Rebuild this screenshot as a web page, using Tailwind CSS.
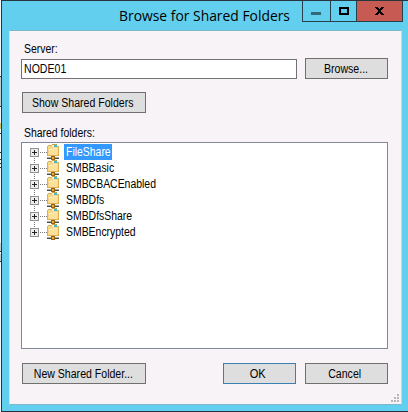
<!DOCTYPE html>
<html lang="en">
<head>
<meta charset="utf-8">
<title>Browse for Shared Folders</title>
<script src="https://cdn.jsdelivr.net/npm/@tailwindcss/browser@4"></script>
</head>
<body class="flex w-[408px] h-[412px] overflow-hidden bg-[#f4f6f7] font-['Liberation_Sans',sans-serif] text-[12px] leading-[16px] text-black">
<svg width="0" height="0" class="absolute">
  <symbol id="share" viewBox="0 0 14 16" shape-rendering="crispEdges">
    <path d="M1 2h1V1h4v1h7v10H1z" fill="#dfac50"/>
    <path d="M6 0h5v2H6z" fill="#c8a04d"/><path d="M8 1h3v2H8z" fill="#4fb6c6"/><path d="M6 1h2v2H6z" fill="#fff0bd"/>
    <path d="M2 2h4v1h6v8H2z" fill="#f8d586"/>
    <path d="M8 1h3v1H8z" fill="#4fb6c6"/>
    <path d="M3 5h3v-1h6v7H3z" fill="#ffe09b"/><path d="M3 5h3v1H3zM7 4h4v1H7z" fill="#fff1c4"/>
    <path d="M6 12h2v1H6z" fill="#666"/>
    <path d="M1 13h12v2H1z" fill="#aaa99c"/><path d="M1 14h12v1H1z" fill="#504f48"/>
    <path d="M5 12h4v4H5z" fill="#926412"/><path d="M6 13h2v2H6z" fill="#e3ae2c"/>
  </symbol>
  <symbol id="plus" viewBox="0 0 9 9" shape-rendering="crispEdges">
    <path d="M0 0h9v9H0z" fill="#919191"/><path d="M1 1h7v7H1z" fill="#ededed"/>
    <path d="M2 4h5v1H2zM4 2h1v5H4z" fill="#222"/>
  </symbol>
</svg>
<svg class="shrink-0" width="1" height="412" viewBox="0 0 1 412" shape-rendering="crispEdges">
  <path d="M0 77h1v29H0zM0 243h1v8H0zM0 254h1v7H0z" fill="#c5ccd0"/><path d="M0 123h1v6H0z" fill="#d8c067"/>
  <path d="M0 76h1v1H0zM0 106h1v1H0zM0 133h1v1H0zM0 152h1v1H0zM0 159h1v1H0zM0 163h1v1H0zM0 167h1v1H0zM0 251h1v1H0zM0 261h1v1H0z" fill="#333"/>
</svg>
<div class="h-[412px] w-[407px] border-l border-y border-[#26343c] bg-[#62cfee] flex flex-col">
  <header class="h-[29px] flex shrink-0">
    <h1 class="w-[300px] pl-[117px] pt-[4px] font-['Open_Sans',sans-serif] text-[15px] leading-[20px] whitespace-nowrap"><span class="inline-block origin-left scale-x-[.925]">Browse for Shared Folders</span></h1>
    <div class="flex h-[21px] w-[101px] border-x border-b border-[#26404c]">
      <div class="w-[28px] border-r border-[#26404c] pl-[8px] pt-[11px]"><div class="h-[3px] w-[10px] bg-[#34697a]"></div></div>
      <div class="w-[26px] border-r border-[#26404c] pl-[8px] pt-[6px]"><div class="h-[8px] w-[10px] border-2 border-black"></div></div>
      <div class="flex-1 bg-[#c75a52] pl-[18px] pt-[6px]"><svg width="9" height="8" viewBox="0 0 9 8" shape-rendering="crispEdges"><path d="M0 0h3v1h1v1h1V1h1V0h3v1H8v1H7v1H6v2h1v1h1v1h1v1H6V7H5V6H4v1H3v1H0V7h1V6h1V5h1V3H2V2H1V1H0z"/></svg></div>
    </div>
  </header>
  <main class="ml-[7px] w-[393px] h-[375px] border border-[#7db8cf] border-l-[#c4e4ef] border-r-[#b5dcea] bg-[#f7f3f7] pl-[11px] pt-[10px] relative">
    <div class="h-[16px] pl-[3px] mb-[2px]"><span class="inline-block origin-left scale-x-[.87]">Server:</span></div>
    <div class="flex">
      <div class="w-[276px] h-[20px] border border-[#717176] bg-white pl-[2px] pt-px"><span class="inline-block origin-left scale-x-[.88]">NODE01</span></div>
      <div class="ml-[8px] -mt-px w-[83px] h-[21px] border border-[#707070] bg-[#dedede] text-center pt-[2px]"><span class="inline-block scale-x-[.88]">Browse...</span></div>
    </div>
    <div class="mt-[13px] ml-px w-[124px] h-[21px] border border-[#707070] bg-[#dedede] text-center pt-[2px] pr-[2px]"><span class="inline-block scale-x-[.88] whitespace-nowrap">Show Shared Folders</span></div>
    <div class="mt-[12px] h-[16px] pl-[3px]"><span class="inline-block origin-left scale-x-[.87]">Shared folders:</span></div>
    <div id="tree" class="mt-px w-[367px] h-[207px] border border-[#82879a] bg-white pl-[8px] pt-px"></div>
    <div class="mt-[14px] ml-px flex whitespace-nowrap">
      <div class="w-[124px] h-[21px] border border-[#707070] bg-[#dedede] text-center pt-[2px] pr-[2px]"><span class="inline-block scale-x-[.88]">New Shared Folder...</span></div>
      <div class="ml-[77px] w-[73px] h-[21px] border border-[#3c7fb1] bg-[#dedede] text-center pt-[2px] pr-[3px]"><span class="inline-block scale-x-[.92]">OK</span></div>
      <div class="ml-[9px] w-[83px] h-[21px] border border-[#707070] bg-[#dedede] text-center pt-[2px] pr-[4px]"><span class="inline-block scale-x-[.88]">Cancel</span></div>
    </div>
    <svg class="absolute right-px bottom-px" width="9" height="9" viewBox="0 0 9 9" shape-rendering="crispEdges" fill="#b9b6b9"><path d="M6 0h2v2H6zM3 3h2v2H3zM6 3h2v2H6zM0 6h2v2H0zM3 6h2v2H3zM6 6h2v2H6z"/></svg>
  </main>
</div>
<script>
  const rows = ['FileShare', 'SMBBasic', 'SMBCBACEnabled', 'SMBDfs', 'SMBDfsShare', 'SMBEncrypted'];
  document.getElementById('tree').innerHTML = rows.map((name, i) => `
    <div class="flex h-[16px]">
      <svg width="34" height="16" shape-rendering="crispEdges">
        <path d="M10 8.5h7" stroke="#777" stroke-dasharray="1 1"/>
        ${i < 5 ? '<path d="M4.500 14v2" stroke="#777" stroke-dasharray="1 1"/>' : ''}
        ${i > 0 ? '<path d="M4.500 0v4" stroke="#777" stroke-dasharray="1 1"/>' : ''}
        <use href="#plus" x="0" y="4" width="9" height="9"/>
        <use href="#share" x="16" y="0" width="14" height="16"/>
      </svg>
      <div class="${i === 0 ? 'bg-[#3399ff] text-white w-[48px]' : ''} h-[16px] pl-[2px] whitespace-nowrap"><span class="inline-block origin-left scale-x-[.87]">${name}</span></div>
    </div>`).join('');
</script>
</body>
</html>
